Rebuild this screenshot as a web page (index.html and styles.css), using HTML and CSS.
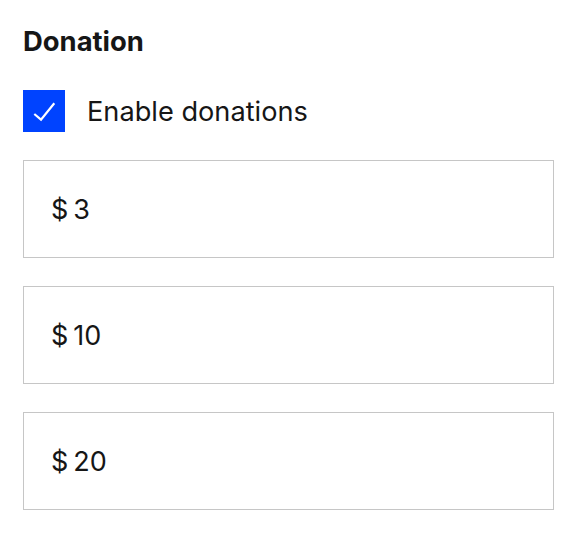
FILE: index.html
```html
<!DOCTYPE html>
<html>
<head>
<meta charset="utf-8">
<link rel="stylesheet" href="styles.css">
</head>
<body>
<section class="donation">
  <h2 class="title">Donation</h2>
  <label class="check">
    <span class="box">
      <svg width="42" height="42" viewBox="0 0 42 42"><path d="M11.3 24 L18 29.6 L31.3 13.3" fill="none" stroke="#fff" stroke-width="2.2"/></svg>
    </span>
    <span class="check-label">Enable donations</span>
  </label>
  <div class="amount">$&#8201;3</div>
  <div class="amount">$&#8201;10</div>
  <div class="amount">$&#8201;20</div>
</section>
</body>
</html>
```
FILE: styles.css
```css
html, body { margin: 0; padding: 0; background: #fff; }
body { font-family: Inter, "Liberation Sans", sans-serif; color: #161616; }
.donation {
  padding: 26px 29px 0 23px;
  display: flex;
  flex-direction: column;
}
.title {
  margin: 0;
  font-size: 27.4px;
  font-weight: 700;
  line-height: 30px;
}
.check {
  display: flex;
  align-items: center;
  gap: 22px;
  margin-top: 34px;
}
.box {
  width: 42px;
  height: 42px;
  background: #0043ff;
  display: block;
}
.box svg { display: block; }
.check-label { font-size: 27.2px; }
.amount {
  margin-top: 28px;
  height: 96px;
  border: 1px solid #c6c6c6;
  display: flex;
  align-items: center;
  padding-left: 27px;
  font-size: 27px;
}
.check + .amount { margin-top: 28px; }
```
